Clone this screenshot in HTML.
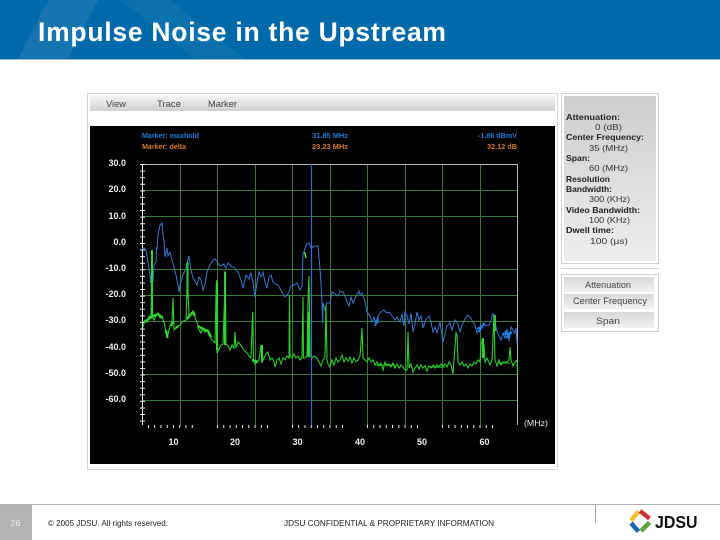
<!DOCTYPE html>
<html><head><meta charset="utf-8"><title>Impulse Noise in the Upstream</title>
<style>
html,body{margin:0;padding:0;background:#fff;width:720px;height:540px;overflow:hidden}
svg{position:absolute;left:0;top:0;display:block}
text{font-family:"Liberation Sans",sans-serif}
</style></head><body>
<svg width="720" height="540" viewBox="0 0 720 540" xmlns="http://www.w3.org/2000/svg">
<defs>
<linearGradient id="bar" x1="0" y1="0" x2="0" y2="1"><stop offset="0" stop-color="#f6f6f6"/><stop offset="1" stop-color="#cfcfcf"/></linearGradient>
<linearGradient id="side" x1="0" y1="0" x2="0" y2="1"><stop offset="0" stop-color="#cdcdcd"/><stop offset="1" stop-color="#eeeeee"/></linearGradient>
<linearGradient id="btn" x1="0" y1="0" x2="0" y2="1"><stop offset="0" stop-color="#d8d8d8"/><stop offset="1" stop-color="#f2f2f2"/></linearGradient>
<filter id="b" x="-5%" y="-5%" width="110%" height="110%"><feGaussianBlur stdDeviation="0.3"/></filter>
<filter id="c" filterUnits="userSpaceOnUse" x="90" y="126" width="465" height="338"><feGaussianBlur stdDeviation="0.35"/></filter>
</defs>
<!-- header -->
<rect width="720" height="59" fill="#0069aa"/>
<polygon points="18,59 48,0 98,0 68,59" fill="#1675b0"/>
<polygon points="120,0 170,0 245,59 195,59" fill="#0c70ad"/>
<rect y="59" width="720" height="1" fill="#9db4c4"/>
<text x="38" y="41" font-size="26.5" font-weight="bold" fill="#fff" textLength="408" lengthAdjust="spacing">Impulse Noise in the Upstream</text>

<!-- frame -->
<rect x="87.5" y="93.5" width="470" height="376" fill="#fff" stroke="#d4d4d4"/>
<rect x="90" y="95" width="465" height="16" fill="url(#bar)"/>
<g filter="url(#b)" font-size="9" fill="#444">
<text x="106" y="107" textLength="20" lengthAdjust="spacingAndGlyphs">View</text>
<text x="157" y="107" textLength="24" lengthAdjust="spacingAndGlyphs">Trace</text>
<text x="208" y="107" textLength="29" lengthAdjust="spacingAndGlyphs">Marker</text>
</g>
<rect x="90" y="126" width="465" height="338" fill="#000"/>

<g filter="url(#c)">
<!-- grid -->
<g stroke="#3a7a36" stroke-width="1" fill="none">
<path d="M180.5 164V425M217.5 164V425M255.5 164V425M292.5 164V425M330.5 164V425M367.5 164V425M405.5 164V425M442.5 164V425M480.5 164V425"/>
<path d="M142 190.5H518M142 216.5H518M142 269.5H518M142 295.5H518M142 321.5H518M142 374.5H518M142 400.5H518"/>
</g>
<path d="M142.5 425V164.5H517.5V425" fill="none" stroke="#b8b8b8" stroke-width="1"/>
<!-- axis ticks -->
<path d="M142.5 164V425" stroke="#f0f0f0" stroke-width="5" stroke-dasharray="1 5.58" fill="none"/>
<path d="M142.5 164V425" stroke="#f0f0f0" stroke-width="1" fill="none"/>
<g stroke="#f0f0f0" stroke-width="3" stroke-dasharray="1 5.25" fill="none">
<path d="M148 426.5H194"/><path d="M217 426.5H268"/><path d="M292 426.5H344"/><path d="M367 426.5H418"/><path d="M442 426.5H494"/>
</g>

<!-- blue trace -->
<polyline fill="none" stroke="#3579cf" stroke-width="1" points="142,249 144,248 146,250 148,262 150,275 150.5,283 152,270 153,281 154,265 156,262 156.5,247 157,250 158,235 160,225 162,223 163,235 164,240 165,257 167,248 168,256 170,252 172,260 174,267 176,275 178,285 179,292 180,285 183,275 186,268 188,260 189,256 191,270 193,278 195,281 197,285 199,277 201,280 203,290 205,284 207,272 210,265 213,260 215,259 218,263 220,266 224,264 226,268 228,263 232,267 234,267 236,270 238,272 241,280 243,288 245,280 246,275 249,279 251,273 253,282 255,297 257,282 259,272 261,277 263,272 265,282 267,288 269,277 271,275 273,282 275,284 278,285 282,292 285,297 288,294 291,286 294,285 297,283 300,290 302,286 303,255 305,248 307,244 309,243 311,248 313,247 315,246 318,246 319,258 320.5,275 321.7,295 322.7,323 323,303 325,310 327,303 330,303 331,297 332,292 335,294 338,296 340,291 343,292 345,296 347,302 349,306 351,297 353,303 356,296 359,291 360,295 362,293 365,302 367,312 370,316 372,322 374,317 376,324 378,316 381,312 384,310 387,313 389,312 392,316 395,320 397,317 400,322 402,314 404,326 405,312 407,316 409,324 411,313 413,332 415,324 417,312 419,320 421,316 423,328 426,319 429,316 431,322 433,332 435,327 437,333 440,322 443,342 445,334 447,326 450,323 452,330 455,320 458,324 460,332 462,325 465,319 468,315 471,318 473,322 475,325 477,333 479,330 482,328 484,323 486,326 489,325 491,320 493,313 495,322 497,332 499,336 501,340 503,333 505,338 507,329 509,341 511,327 513,330 515,333 516,328 517,343"/>
<path d="M375 321l4 1M378 318l-3 8M484 323l-5 9M484 325l-7 4M503 334l8-1M505 331l4 6M506 338l6-6" stroke="#1f7ee6" stroke-width="2" fill="none"/>

<!-- green trace -->
<polyline fill="none" stroke="#2ccf2c" stroke-width="1.1" points="143,327 145,320 147,322 149,316 151,318 151.5,280 152,316 154,320 156,316 158,313 160,318 162,317 164,322 166,332 167,338 168,334 170,326 172,322 173,298 174,330 176,328 178,326 180,325 182,322 184,321 186,320 187,290 187.5,265 188,290 189,316 191,314 193,312 195,317 197,323 199,330 201,333 203,328 205,332 207,330 209,335 211,338 213,341 215,343 216,295 216.5,280 217,353 219,349 221,345 223,344 224.5,300 225,271 225.5,300 226,344 228,346 230,350 232,345 234,348 235,332 236,348 238,342 240,344 242,347 244,350 247,353 249,356 251,358 252.7,312 253.5,360 255,364 257,362 259,360 261,345 262,362 264,358 266,354 268,352 270,360 272,358 274,362 275,367 277,360 279,358 281,364 283,358 285,360 287,356 289,358 289.5,295 290,356 292,358 294,354 296,358 298,356 300,360 302,358 303,297 303.5,358 305,358 307,356 308,300 309,276 310,356 312,358 314,356 317,358 319,362 321,366 323,360 325,357 326,305 327,360 328,364 330,367 332,360 334,365 336,358 338,362 340,360 342,355 344,362 346,358 348,361 350,357 352,363 354,358 356,362 358,360 360,356 362,328 363,358 365,360 367,362 369,358 371,362 373,360 375,365 377,362 379,366 381,363 383,370 385,362 387,366 389,364 391,367 393,363 395,368 397,364 399,368 401,365 403,367 405,370 407,370 408,332 409,368 411,364 413,372 415,368 417,365 419,369 421,365 423,368 425,366 427,371 429,366 431,368 433,365 435,368 437,365 439,367 441,364 443,366 445,364 447,367 449,362 451,365 453,374 454,360 456,333 457,335 458,362 460,365 462,362 464,366 466,364 468,368 470,364 472,366 474,362 476,364 478,360 480,362 481,345 482,340 484,345 485,362 487,358 490,365 492,360 494,315 495,360 497,366 499,360 501,365 503,362 505,362 507,362 509,360 510,347 511,360 513,366 515,362 517,360 517.5,373"/>
<path d="M152 318V250M187.5 298V262M217 350V282M225 345V272M262 362V345M308.5 357V312M483 358V338" stroke="#2fd42f" stroke-width="2" fill="none"/>
<path d="M145 322L151 317L158 314L163 318M166 330L167.5 338M171 326L172.5 322M176 328L178 326M187 319L193 312L195 316M198 326L203 329L208 331L211 337M252 360L258 362" stroke="#2fd42f" stroke-width="2.4" fill="none"/>
<path d="M495 331V315" stroke="#35c24b" stroke-width="2" fill="none"/>
<path d="M375 365H395M430 367H445M498 363H510" stroke="#2fd02f" stroke-width="1.5" fill="none" opacity=".7"/>
<path d="M304.5 252l1.5 6" stroke="#4fdc4f" stroke-width="1.5" fill="none"/>
<!-- marker -->
<path d="M311.5 164V425" stroke="#2f6fd8" stroke-width="1.2" fill="none"/>
</g>

<!-- chart labels -->
<g filter="url(#b)">
<g font-size="7" font-weight="bold">
<text x="142" y="138" fill="#1c7ed6" textLength="57" lengthAdjust="spacingAndGlyphs">Marker: maxhold</text>
<text x="142" y="149" fill="#d8792c" textLength="44" lengthAdjust="spacingAndGlyphs">Marker: delta</text>
</g>
<g font-size="7.5" font-weight="bold">
<text x="312" y="138" fill="#1c7ed6" textLength="36" lengthAdjust="spacingAndGlyphs">31.85 MHz</text>
<text x="312" y="149" fill="#d8792c" textLength="36" lengthAdjust="spacingAndGlyphs">23.23 MHz</text>
<text x="478" y="138" fill="#1c7ed6" textLength="39" lengthAdjust="spacingAndGlyphs">-1.86 dBmV</text>
<text x="487" y="149" fill="#d8792c" textLength="30" lengthAdjust="spacingAndGlyphs">32.12 dB</text>
</g>
<g font-size="9" fill="#f0f0f0" text-anchor="end" font-weight="bold">
<text x="126" y="166">30.0</text><text x="126" y="192">20.0</text><text x="126" y="219">10.0</text><text x="126" y="245">0.0</text><text x="126" y="271">-10.0</text><text x="126" y="297">-20.0</text><text x="126" y="323">-30.0</text><text x="126" y="350">-40.0</text><text x="126" y="376">-50.0</text><text x="126" y="402">-60.0</text>
</g>
<g font-size="9" fill="#f0f0f0" text-anchor="middle" font-weight="bold">
<text x="173.5" y="445">10</text><text x="235" y="445">20</text><text x="297.5" y="445">30</text><text x="360" y="445">40</text><text x="422" y="445">50</text><text x="484.5" y="445">60</text>
</g>
<text x="524" y="426" font-size="8.5" fill="#e8e8e8" textLength="24" lengthAdjust="spacingAndGlyphs">(MHz)</text>
</g>

<!-- right info panel -->
<rect x="561.5" y="93.5" width="97" height="170" fill="#fff" stroke="#d0d0d0"/>
<rect x="564" y="96" width="92" height="165" fill="url(#side)"/>
<rect x="561" y="268" width="98" height="1" fill="#d8d8d8"/>
<g filter="url(#b)" font-size="8.5" fill="#222">
<g font-weight="bold">
<text x="566" y="120" textLength="54" lengthAdjust="spacingAndGlyphs">Attenuation:</text>
<text x="566" y="140" textLength="78" lengthAdjust="spacingAndGlyphs">Center Frequency:</text>
<text x="566" y="161" textLength="24" lengthAdjust="spacingAndGlyphs">Span:</text>
<text x="566" y="182" textLength="44" lengthAdjust="spacingAndGlyphs">Resolution</text>
<text x="566" y="192" textLength="46" lengthAdjust="spacingAndGlyphs">Bandwidth:</text>
<text x="566" y="213" textLength="74" lengthAdjust="spacingAndGlyphs">Video Bandwidth:</text>
<text x="566" y="233" textLength="48" lengthAdjust="spacingAndGlyphs">Dwell time:</text>
</g>
<g fill="#333">
<text x="595" y="130" textLength="27" lengthAdjust="spacingAndGlyphs">0 (dB)</text>
<text x="589" y="151" textLength="39" lengthAdjust="spacingAndGlyphs">35 (MHz)</text>
<text x="589" y="171" textLength="39" lengthAdjust="spacingAndGlyphs">60 (MHz)</text>
<text x="589" y="202" textLength="41" lengthAdjust="spacingAndGlyphs">300 (KHz)</text>
<text x="589" y="223" textLength="41" lengthAdjust="spacingAndGlyphs">100 (KHz)</text>
<text x="590" y="244" textLength="38" lengthAdjust="spacingAndGlyphs">100 (µs)</text>
</g>
</g>

<!-- right buttons -->
<rect x="561.5" y="274.5" width="97" height="57" fill="#fff" stroke="#d0d0d0"/>
<rect x="564" y="277" width="90" height="15" fill="url(#btn)"/>
<rect x="564" y="294" width="90" height="15" fill="url(#btn)"/>
<rect x="564" y="312" width="90" height="16" fill="url(#btn)"/>
<g filter="url(#b)" font-size="9" fill="#444" text-anchor="middle">
<text x="608" y="288" textLength="46" lengthAdjust="spacingAndGlyphs">Attenuation</text>
<text x="610" y="304" textLength="74" lengthAdjust="spacingAndGlyphs">Center Frequency</text>
<text x="608" y="324" textLength="24" lengthAdjust="spacingAndGlyphs">Span</text>
</g>

<!-- footer -->
<rect y="504" width="720" height="1" fill="#b2afa8"/>
<rect y="505" width="32" height="35" fill="#b3b3b3"/>
<rect x="595" y="505" width="1" height="18" fill="#a8a59e"/>
<text x="10.5" y="526" font-size="8.5" fill="#eee" textLength="10" lengthAdjust="spacingAndGlyphs">26</text>
<text x="48" y="526" font-size="8" fill="#222" textLength="120" lengthAdjust="spacingAndGlyphs">© 2005 JDSU. All rights reserved.</text>
<text x="284" y="526" font-size="8" fill="#222" textLength="210" lengthAdjust="spacingAndGlyphs">JDSU CONFIDENTIAL &amp; PROPRIETARY INFORMATION</text>
<!-- logo -->
<g fill="none" stroke-width="4.5" stroke-linecap="butt">
<path d="M631 520.5L638.5 511.5" stroke="#f2c230"/>
<path d="M640 511L649.5 518.5" stroke="#c8323a"/>
<path d="M649.5 522.5L641 531" stroke="#5aa53c"/>
<path d="M638.5 531.5L631 523" stroke="#1f63ae"/>
</g>
<text x="655" y="528" font-size="17.5" font-weight="bold" fill="#111" textLength="42.5" lengthAdjust="spacingAndGlyphs">JDSU</text>
</svg>
</body></html>
